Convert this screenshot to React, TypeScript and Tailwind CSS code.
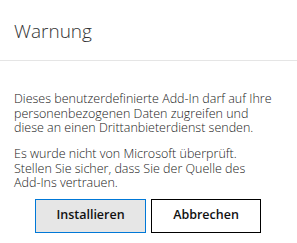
import React from "react";

export default function App() {
  return (
    <div
      className="w-[297px] h-[243px] bg-white text-[#333] overflow-hidden"
      style={{ fontFamily: '"Open Sans", "Noto Sans", sans-serif' }}
    >
      {/* Header */}
      <div className="h-[61px] px-[14px] pt-[19px] border-b border-[#e5e5e5]">
        <h1 className="text-[19px] leading-[24px] font-light text-[#333]">Warnung</h1>
      </div>

      {/* Body */}
      <div className="px-[14px] pt-[31px] text-[12.5px] leading-[14.5px] font-light text-[#222] whitespace-nowrap">
        <p>
          Dieses benutzerdefinierte Add-In darf auf Ihre
          <br />
          personenbezogenen Daten zugreifen und
          <br />
          diese an einen Drittanbieterdienst senden.
        </p>
        <p className="mt-[11.5px]">
          Es wurde nicht von Microsoft überprüft.
          <br />
          Stellen Sie sicher, dass Sie der Quelle des
          <br />
          Add-Ins vertrauen.
        </p>
      </div>

      {/* Buttons */}
      <div className="flex gap-[5px] pl-[35px] pt-[8px]">
        <button className="w-[111px] h-[34px] bg-[#e6e6e6] border border-[#0078d7] text-[12.5px] font-semibold text-[#111]">
          Installieren
        </button>
        <button className="w-[110px] h-[34px] bg-white border border-black text-[12.5px] font-semibold text-[#111]">
          Abbrechen
        </button>
      </div>
    </div>
  );
}
